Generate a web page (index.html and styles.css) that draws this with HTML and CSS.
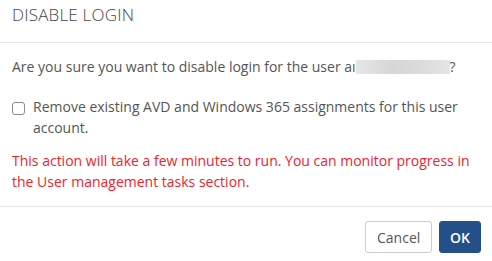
FILE: index.html
```html
<!DOCTYPE html>
<html>
<head>
<meta charset="utf-8">
<link rel="stylesheet" href="styles.css">
</head>
<body>
<div class="dialog">
  <div class="header"><h1 class="title">DISABLE LOGIN</h1></div>
  <div class="body">
    <p class="question">Are you sure you want to disable login for the user a<span class="cursor">ı</span><span class="redacted"></span>?</p>
    <label class="check">
      <span class="box"></span>
      <span class="label-text">Remove existing AVD and Windows 365 assignments for this user account.</span>
    </label>
    <p class="warning">This action will take a few minutes to run. You can monitor progress in the User management tasks section.</p>
  </div>
  <div class="footer">
    <button class="btn btn-cancel">Cancel</button>
    <button class="btn btn-ok">OK</button>
  </div>
</div>
</body>
</html>
```

FILE: styles.css
```css
* { box-sizing: border-box; }
html, body { margin: 0; padding: 0; background: #fff; }
body {
  font-family: "Open Sans", "Liberation Sans", sans-serif;
  font-size: 14px;
  line-height: 21px;
  color: #555;
}
.dialog { width: 492px; }
.header {
  height: 43px;
  padding: 3px 12px 0;
  border-bottom: 1px solid #e5e5e5;
}
.title {
  margin: 0;
  font-size: 17px;
  line-height: 24px;
  font-weight: 300;
  letter-spacing: 0.2px;
  color: #444;
}
.body {
  padding: 13px 12px 14px;
}
.question { margin: 0 0 19px; }
.cursor { color: #555; }
.redacted {
  display: inline-block;
  width: 94px;
  height: 14px;
  vertical-align: -2px;
  background: linear-gradient(90deg, #e6e6e6, #d6d6d6 40%, #dedede 80%, #e6e6e6);
}
.check {
  display: flex;
  align-items: flex-start;
  gap: 8px;
}
.box {
  flex: none;
  width: 13px;
  height: 13px;
  margin-top: 6px;
  border: 1px solid #8a8a8a;
  border-radius: 3px;
  background: #fff;
}
.warning {
  margin: 12px 0 0;
  color: #f0222c;
}
.footer {
  border-top: 1px solid #e5e5e5;
  padding: 14px 11px 8px;
  display: flex;
  justify-content: flex-end;
  gap: 7px;
}
.btn {
  height: 32px;
  font-family: inherit;
  font-size: 14px;
  border-radius: 3px;
  padding: 0 11px;
  cursor: pointer;
}
.btn-cancel {
  width: 67px;
  background: #fff;
  border: 1px solid #ccc;
  color: #555;
}
.btn-ok {
  width: 42px;
  background: #245089;
  border: 1px solid #245089;
  color: #fff;
  font-weight: 600;
  padding: 0;
}
```
